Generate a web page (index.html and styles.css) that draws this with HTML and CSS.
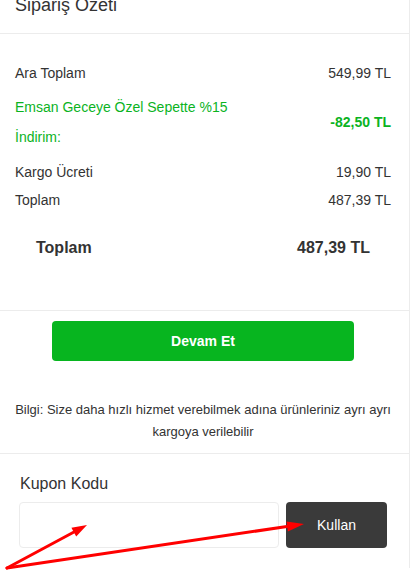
FILE: index.html
```html
<!DOCTYPE html>
<html>
<head>
<meta charset="utf-8">
<title>Sipariş Özeti</title>
<link rel="stylesheet" href="styles.css">
</head>
<body>
    <div class="summary">
        <!-- başlık -->
        <div class="summary-head">
            <h3 class="summary-title">Sipariş Özeti</h3>
        </div>

        <!-- tutarlar -->
        <div class="totals">
            <div class="row">
                <span>Ara Toplam</span>
                <span>549,99 TL</span>
            </div>
            <div class="row row-discount">
                <span class="discount-label">Emsan Geceye Özel Sepette %15 İndirim:</span>
                <b>-82,50 TL</b>
            </div>
            <div class="row">
                <span>Kargo Ücreti</span>
                <span>19,90 TL</span>
            </div>
            <div class="row">
                <span>Toplam</span>
                <span>487,39 TL</span>
            </div>
            <div class="row row-grand">
                <b>Toplam</b>
                <b>487,39 TL</b>
            </div>
        </div>

        <!-- devam -->
        <div class="checkout">
            <a href="javascript:;" class="btn-go">Devam Et</a>
            <p class="info">Bilgi: Size daha hızlı hizmet verebilmek adına ürünleriniz ayrı ayrı kargoya verilebilir</p>
        </div>

        <!-- kupon -->
        <div class="coupon">
            <label class="coupon-title" for="coupon">Kupon Kodu</label>
            <div class="coupon-form">
                <input type="text" id="coupon" class="coupon-input">
                <button type="button" class="btn-use">Kullan</button>
            </div>
        </div>
    </div>

    <svg class="marks" width="414" height="576" viewBox="0 0 414 576">
        <g stroke="#f00" stroke-width="3" stroke-linecap="round" fill="none">
            <line x1="7" y1="568" x2="74" y2="532"/>
            <line x1="7" y1="568" x2="287" y2="526.5"/>
        </g>
        <g fill="#f00">
            <polygon points="87,525 76.2,536.5 71.4,527.7"/>
            <polygon points="304,524 287.9,531.4 286.5,521.5"/>
        </g>
    </svg>
</body>
</html>
```

FILE: styles.css
```css
* { margin: 0; padding: 0; box-sizing: border-box; }
body { font-family: "Liberation Sans", Arial, sans-serif; color: #333; background: #fff; overflow: hidden; }

.summary { width: 410px; border-right: 1px solid #ececec; }

/*başlık*/
.summary-head { display: flow-root; height: 34px; border-bottom: 1px solid #ececec; padding-left: 15px; }
.summary-title { margin-top: -5px; font-size: 18px; font-weight: normal; line-height: 21px; color: #333; }

/*tutarlar*/
.totals { padding: 25px 18px 48px 15px; border-bottom: 1px solid #ececec; }
.row { display: flex; justify-content: space-between; align-items: center; font-size: 14px; line-height: 28px; }
.row-discount { margin: 5px 0 6px; color: #0bb31f; }
.discount-label { width: 225px; line-height: 30px; }
.row-grand { margin-top: 20px; padding: 0 21px; font-size: 16px; }

/*devam*/
.checkout { padding: 10px 0 10px; border-bottom: 1px solid #ececec; }
.btn-go { display: block; width: 302px; height: 40px; margin-left: 52px; background-color: #07b51f; border-radius: 4px; color: #fff; font-size: 14px; font-weight: bold; line-height: 40px; text-align: center; text-decoration: none; }
.info { margin-top: 38px; padding: 0 18px 0 15px; font-size: 13px; line-height: 22px; text-align: center; }

/*kupon*/
.coupon { padding: 20px 0 20px 19px; }
.coupon-title { display: block; margin-bottom: 8px; padding-left: 1px; font-size: 16px; line-height: 20px; }
.coupon-form { display: flex; gap: 7px; }
.coupon-input { width: 260px; height: 46px; border: 1px solid #ececec; border-radius: 4px; outline: none; }
.btn-use { width: 101px; height: 46px; border: none; border-radius: 4px; background-color: #3a3a3a; color: #fff; font-family: inherit; font-size: 14px; cursor: pointer; }

/*oklar*/
.marks { position: absolute; top: 0; left: 0; pointer-events: none; }
```
